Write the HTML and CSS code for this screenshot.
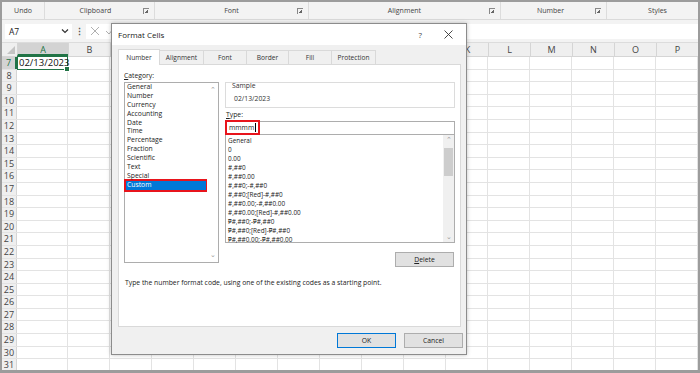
FILE: index.html
```html
<!DOCTYPE html>
<html lang="en">
  <head>
    <meta charset="UTF-8" />
    <title>Format Cells</title>
    <link rel="stylesheet" href="styles.css">
  </head>
  <body>
    <div class="screen">
      <div class="ribbon">
        <div class="group g-undo">Undo</div>
        <div class="group g-clip">Clipboard<span class="launcher"></span></div>
        <div class="group g-font">Font<span class="launcher"></span></div>
        <div class="group g-align">Alignment<span class="launcher"></span></div>
        <div class="group g-num">Number<span class="launcher"></span></div>
        <div class="group g-styles">Styles</div>
      </div>

      <div class="formula-bar">
        <div class="name-box">
          <span>A7</span>
          <svg width="8" height="6" viewBox="0 0 8 6"><path d="M1 1.5 L4 4.5 L7 1.5" fill="none" stroke="#333" stroke-width="1.2"/></svg>
        </div>
        <span class="dots">⋮</span>
        <div class="fx-box">
          <svg width="10" height="10" viewBox="0 0 10 10"><path d="M1 1 L9 9 M9 1 L1 9" stroke="#b0b0b0" stroke-width="1"/></svg>
          <svg width="10" height="10" viewBox="0 0 10 10"><path d="M1 5 L4 8 L9 2" fill="none" stroke="#b0b0b0" stroke-width="1"/></svg>
        </div>
      </div>

      <div class="sheet">
        <div class="head-row">
          <div class="corner"><svg width="8" height="8" viewBox="0 0 8 8"><path d="M8 0 L8 8 L0 8 Z" fill="#c4c4c4"/></svg></div>
          <div class="col col-a active">A</div>
          <div class="col">B</div><div class="col">C</div><div class="col">D</div><div class="col">E</div>
          <div class="col">F</div><div class="col">G</div><div class="col">H</div><div class="col">I</div>
          <div class="col">J</div><div class="col">K</div><div class="col">L</div><div class="col">M</div>
          <div class="col">N</div><div class="col">O</div><div class="col">P</div>
        </div>
        <div class="row"><span class="rn active">7</span><div class="cell-a selected">02/13/2023</div><div class="cells"></div></div>
        <div class="row"><span class="rn">8</span><div class="cell-a"></div><div class="cells"></div></div>
        <div class="row"><span class="rn">9</span><div class="cell-a"></div><div class="cells"></div></div>
        <div class="row"><span class="rn">10</span><div class="cell-a"></div><div class="cells"></div></div>
        <div class="row"><span class="rn">11</span><div class="cell-a"></div><div class="cells"></div></div>
        <div class="row"><span class="rn">12</span><div class="cell-a"></div><div class="cells"></div></div>
        <div class="row"><span class="rn">13</span><div class="cell-a"></div><div class="cells"></div></div>
        <div class="row"><span class="rn">14</span><div class="cell-a"></div><div class="cells"></div></div>
        <div class="row"><span class="rn">15</span><div class="cell-a"></div><div class="cells"></div></div>
        <div class="row"><span class="rn">16</span><div class="cell-a"></div><div class="cells"></div></div>
        <div class="row"><span class="rn">17</span><div class="cell-a"></div><div class="cells"></div></div>
        <div class="row"><span class="rn">18</span><div class="cell-a"></div><div class="cells"></div></div>
        <div class="row"><span class="rn">19</span><div class="cell-a"></div><div class="cells"></div></div>
        <div class="row"><span class="rn">20</span><div class="cell-a"></div><div class="cells"></div></div>
        <div class="row"><span class="rn">21</span><div class="cell-a"></div><div class="cells"></div></div>
        <div class="row"><span class="rn">22</span><div class="cell-a"></div><div class="cells"></div></div>
        <div class="row"><span class="rn">23</span><div class="cell-a"></div><div class="cells"></div></div>
        <div class="row"><span class="rn">24</span><div class="cell-a"></div><div class="cells"></div></div>
        <div class="row"><span class="rn">25</span><div class="cell-a"></div><div class="cells"></div></div>
        <div class="row"><span class="rn">26</span><div class="cell-a"></div><div class="cells"></div></div>
        <div class="row"><span class="rn">27</span><div class="cell-a"></div><div class="cells"></div></div>
        <div class="row"><span class="rn">28</span><div class="cell-a"></div><div class="cells"></div></div>
        <div class="row"><span class="rn">29</span><div class="cell-a"></div><div class="cells"></div></div>
        <div class="row"><span class="rn">30</span><div class="cell-a"></div><div class="cells"></div></div>
        <div class="row"><span class="rn">31</span><div class="cell-a"></div><div class="cells"></div></div>
      </div>

      <!-- Format Cells dialog -->
      <div class="dialog">
        <div class="title-bar">
          <span class="title">Format Cells</span>
          <span class="help">?</span>
          <svg class="close" width="9" height="9" viewBox="0 0 9 9"><path d="M0.5 0.5 L8.5 8.5 M8.5 0.5 L0.5 8.5" stroke="#333" stroke-width="0.9"/></svg>
        </div>
        <div class="dialog-body">
          <div class="tabs">
            <div class="tab active">Number</div>
            <div class="tab">Alignment</div>
            <div class="tab">Font</div>
            <div class="tab">Border</div>
            <div class="tab">Fill</div>
            <div class="tab">Protection</div>
          </div>
          <div class="panel">
            <div class="panel-grid">
              <div class="category">
                <div class="label"><u>C</u>ategory:</div>
                <div class="listbox cat-list">
                  <ul>
                    <li>General</li>
                    <li>Number</li>
                    <li>Currency</li>
                    <li>Accounting</li>
                    <li>Date</li>
                    <li>Time</li>
                    <li>Percentage</li>
                    <li>Fraction</li>
                    <li>Scientific</li>
                    <li>Text</li>
                    <li>Special</li>
                    <li class="picked">Custom</li>
                  </ul>
                  <div class="scroll plain">
                    <span class="arrow">&#8963;</span>
                    <span class="arrow">&#8964;</span>
                  </div>
                </div>
              </div>
              <div class="type-side">
                <div class="sample">
                  <div class="sample-title">Sample</div>
                  <div class="sample-value">02/13/2023</div>
                </div>
                <div class="label"><u>T</u>ype:</div>
                <div class="type-input"><span class="marked">mmmm<span class="caret"></span></span></div>
                <div class="listbox type-list">
                  <ul>
                    <li>General</li>
                    <li>0</li>
                    <li>0.00</li>
                    <li>#,##0</li>
                    <li>#,##0.00</li>
                    <li>#,##0;-#,##0</li>
                    <li>#,##0;[Red]-#,##0</li>
                    <li>#,##0.00;-#,##0.00</li>
                    <li>#,##0.00;[Red]-#,##0.00</li>
                    <li>₱#,##0;-₱#,##0</li>
                    <li>₱#,##0;[Red]-₱#,##0</li>
                    <li>₱#,##0.00;-₱#,##0.00</li>
                  </ul>
                  <div class="scroll">
                    <span class="arrow">&#8963;</span>
                    <span class="thumb"></span>
                    <span class="arrow down">&#8964;</span>
                  </div>
                </div>
                <div class="delete-row"><button class="btn"><u>D</u>elete</button></div>
              </div>
            </div>
            <p class="hint">Type the number format code, using one of the existing codes as a starting point.</p>
          </div>
          <div class="actions">
            <button class="btn default">OK</button>
            <button class="btn">Cancel</button>
          </div>
        </div>
      </div>
    </div>
  </body>
</html>
```

FILE: styles.css
```css
body {
  margin: 0;
  font-family: "Open Sans", "Noto Sans", sans-serif;
  overflow: hidden;
}
.screen {
  position: relative;
  width: 700px;
  height: 373px;
  box-sizing: border-box;
  border: 2px solid #9c9c9c;
  border-bottom-width: 3px;
  background: #fff;
  overflow: hidden;
}

/* ribbon group labels */
.ribbon {
  display: flex;
  height: 17px;
  background: #f3f3f3;
  border-bottom: 1px solid #dadada;
  font-size: 7px;
  color: #444;
}
.group {
  position: relative;
  display: flex;
  align-items: center;
  justify-content: center;
  border-right: 1px solid #dcdcdc;
}
.g-undo { width: 42px; }
.g-clip { width: 110px; padding-right: 8px; box-sizing: border-box; }
.g-font { width: 153px; }
.g-align { width: 191px; }
.g-num { width: 106px; padding-right: 6px; box-sizing: border-box; }
.g-styles { flex: 1; border-right: none; padding-left: 10px; }
.launcher {
  position: absolute;
  right: 5px;
  top: 6px;
  width: 5px;
  height: 5px;
  border-left: 1px solid #888;
  border-top: 1px solid #888;
}
.launcher::after {
  content: "";
  position: absolute;
  left: 1px;
  top: 1px;
  width: 3px;
  height: 3px;
  background: linear-gradient(135deg, transparent 45%, #666 46%);
}

/* name box + formula */
.formula-bar {
  display: flex;
  align-items: center;
  height: 23px;
  background: #f3f3f3;
  padding: 0 0 0 3px;
  border-bottom: 1px solid #dcdcdc;
  box-sizing: border-box;
}
.name-box {
  display: flex;
  align-items: center;
  justify-content: space-between;
  width: 67px;
  height: 15px;
  background: #fff;
  box-sizing: border-box;
  padding: 0 3px 0 4px;
  font-size: 8.5px;
  color: #222;
}
.dots {
  width: 14px;
  text-align: center;
  font-size: 9px;
  color: #555;
  font-weight: bold;
}
.fx-box {
  display: flex;
  align-items: center;
  gap: 5px;
  flex: 1;
  height: 15px;
  background: #fff;
  padding-left: 4px;
}

/* worksheet */
.sheet {
  font-family: "Open Sans", "Liberation Sans", sans-serif;
}
.head-row {
  display: flex;
  height: 14px;
  background: #efefef;
  border-bottom: 1px solid #d5d5d5;
  box-sizing: border-box;
}
.corner {
  width: 15px;
  display: flex;
  align-items: flex-end;
  justify-content: flex-end;
  padding: 0 2px 2px 0;
  box-sizing: border-box;
}
.col {
  width: 42px;
  box-sizing: border-box;
  border-left: 1px solid #d5d5d5;
  text-align: center;
  font-size: 9px;
  line-height: 13px;
  color: #444;
}
.col.col-a { width: 51px; }
.col.active {
  background: #d3d3d3;
  color: #217346;
  border-bottom: 2px solid #217346;
}
.row {
  display: flex;
  height: 12.6px;
  box-sizing: border-box;
  border-bottom: 1px solid #e3e3e3;
}
.rn {
  width: 15px;
  flex: none;
  background: #efefef;
  border-right: 1px solid #d5d5d5;
  box-sizing: border-box;
  font-size: 9px;
  line-height: 12px;
  text-align: center;
  color: #444;
}
.rn.active {
  color: #217346;
  background: #d3d3d3;
  border-right: 2px solid #217346;
}
.cell-a {
  width: 51px;
  flex: none;
  box-sizing: border-box;
  border-right: 1px solid #e3e3e3;
  font-size: 9.5px;
  line-height: 11px;
  padding-left: 2px;
  color: #111;
}
.cell-a.selected {
  position: relative;
  border: 1.5px solid #217346;
  height: 14px;
  margin-top: -1px;
  padding-left: 1px;
}
.cell-a.selected::after {
  content: "";
  position: absolute;
  right: -3px;
  bottom: -3px;
  width: 4px;
  height: 4px;
  background: #217346;
  border: 1px solid #fff;
}
.cells {
  flex: 1;
  background: repeating-linear-gradient(to right, transparent 0 41px, #e3e3e3 41px 42px);
}

/* dialog */
.dialog {
  position: absolute;
  left: 109px;
  top: 21px;
  width: 354px;
  height: 330px;
  border: 1px solid #8c8c8c;
  box-shadow: 0 0 4px rgba(0, 0, 0, 0.25);
  background: #f0f0f0;
  display: flex;
  flex-direction: column;
  font-size: 6.8px;
  color: #222;
}
.title-bar {
  display: flex;
  align-items: center;
  height: 21px;
  background: #fff;
  padding: 0 13px 0 6px;
  flex: none;
}
.title {
  flex: 1;
  font-size: 8px;
  color: #222;
}
.help {
  font-size: 8px;
  color: #444;
  margin-right: 22px;
}
.dialog-body {
  flex: 1;
  display: flex;
  flex-direction: column;
  padding: 3px 5px 0 6px;
}
.tabs {
  display: flex;
  align-items: flex-end;
  height: 16px;
}
.tab {
  display: flex;
  align-items: center;
  justify-content: center;
  height: 14px;
  background: #f0f0f0;
  border: 1px solid #d9d9d9;
  border-bottom: none;
  border-left: none;
  box-sizing: border-box;
  font-size: 6.6px;
  white-space: nowrap;
  color: #333;
}
.tab:nth-child(1) { width: 42px; }
.tab:nth-child(2) { width: 44px; }
.tab:nth-child(3) { width: 43px; }
.tab:nth-child(4) { width: 42px; }
.tab:nth-child(5) { width: 43px; }
.tab:nth-child(6) { width: 44px; }
.tab.active {
  height: 16px;
  background: #fff;
  border-left: 1px solid #d9d9d9;
  margin-bottom: -1px;
  position: relative;
}
.panel {
  height: 263px;
  background: #fff;
  border: 1px solid #d9d9d9;
  box-sizing: border-box;
  padding: 4px 5px 0 5px;
}
.panel-grid {
  display: grid;
  grid-template-columns: 95px 230px;
  column-gap: 6px;
}
.label {
  height: 11px;
  line-height: 11px;
}
.category .label { margin-top: 1px; }
.listbox {
  display: flex;
  border: 1px solid #adadad;
  background: #fff;
  box-sizing: border-box;
}
.listbox ul {
  flex: 1;
  list-style: none;
  margin: 0;
  padding: 0 0 0 1px;
}
.listbox li {
  height: 8.9px;
  line-height: 8.9px;
  padding-left: 1px;
  white-space: nowrap;
}
.cat-list {
  height: 181px;
  margin-top: 1px;
}
.cat-list li.picked {
  background: #0078d7;
  color: #fff;
  box-shadow: 0 0 0 2px #e8141c;
  margin: 0 1px 0 0;
}
.scroll {
  width: 11px;
  display: flex;
  flex-direction: column;
  align-items: center;
  background: #f0f0f0;
  color: #666;
}
.scroll.plain {
  background: #fff;
  justify-content: space-between;
  padding: 2px 0;
}
.arrow {
  font-size: 7px;
  line-height: 8px;
  height: 9px;
  color: #999;
}
.scroll .thumb {
  width: 9px;
  height: 28px;
  margin-top: 3px;
  background: #cdcdcd;
}
.scroll .arrow.down {
  margin-top: auto;
}
.sample {
  height: 26px;
  margin-top: 13px;
  padding: 0 0 0 6px;
  border: 1px solid #dcdcdc;
  box-sizing: border-box;
}
.sample-title {
  line-height: 8px;
  margin-top: -1px;
  color: #333;
}
.sample-value {
  line-height: 10px;
  margin-top: 4px;
  padding-left: 2px;
  color: #333;
}
.type-side .label {
  margin-top: 1px;
  margin-left: 1px;
}
.type-input {
  height: 14px;
  border: 1px solid #adadad;
  box-sizing: border-box;
  margin-top: 1px;
}
.marked {
  display: inline-flex;
  align-items: center;
  height: 15px;
  margin: -2px 0 0 -1px;
  padding: 0 2px 0 2px;
  border: 2px solid #e8141c;
  box-sizing: border-box;
}
.caret {
  width: 1px;
  height: 9px;
  background: #000;
  margin-left: 1px;
}
.type-list {
  height: 108px;
  border-top: none;
}
.type-list ul {
  padding-top: 1px;
}
.type-list li {
  height: 9px;
  line-height: 9px;
  font-size: 6.4px;
}
.scroll .arrow:first-child { margin-top: 1px; }
.delete-row {
  display: flex;
  justify-content: flex-end;
  margin-top: 9px;
  padding-right: 1px;
}
.btn {
  width: 59px;
  height: 15px;
  padding: 0;
  font-family: inherit;
  font-size: 6.8px;
  color: #222;
  background: #e1e1e1;
  border: 1px solid #adadad;
}
.hint {
  margin: 11px 0 0 1px;
  line-height: 10px;
}
.actions {
  display: flex;
  justify-content: flex-end;
  gap: 8px;
  margin-top: 6px;
  margin-right: -2px;
}
.btn.default {
  border: 1.5px solid #0078d7;
}
```
